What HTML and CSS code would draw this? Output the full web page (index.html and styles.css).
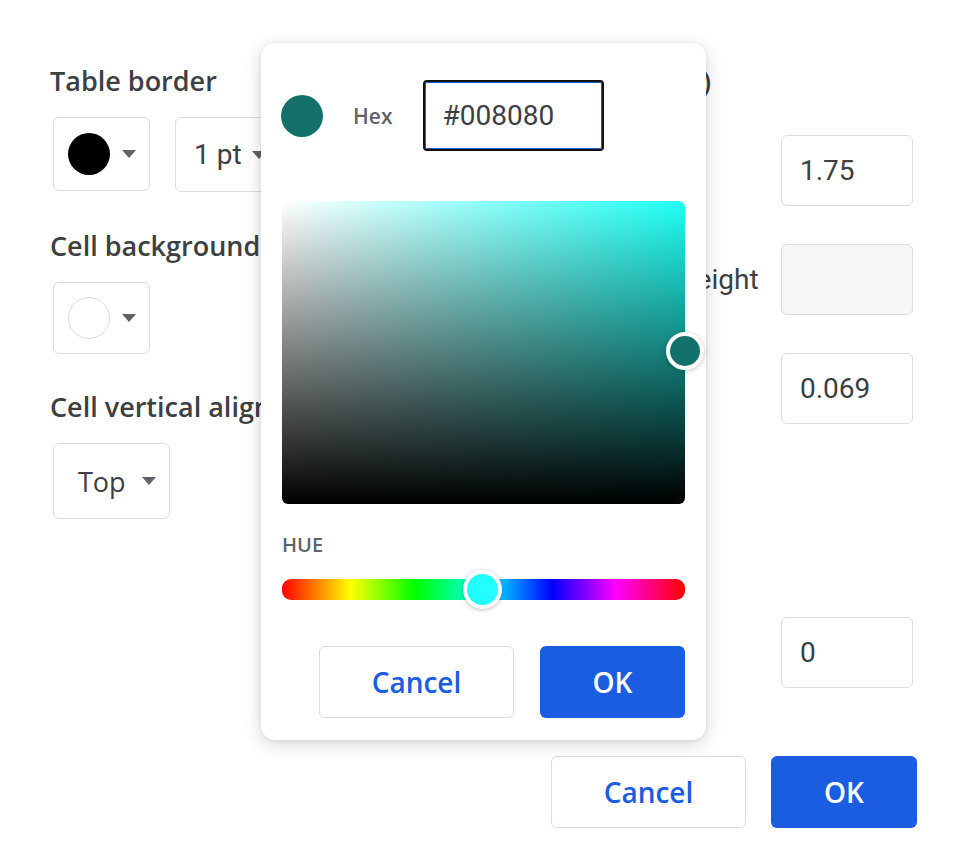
FILE: index.html
```html
<!DOCTYPE html>
<html lang="en">
<head>
<meta charset="utf-8">
<title>Table properties</title>
<link rel="stylesheet" href="styles.css">
</head>
<body>
<div class="page">
  <div class="main">
    <div class="left">
      <div class="section">
        <p class="label">Table border</p>
        <div class="field">
          <button class="color-btn"><span class="dot dot-black"></span><span class="caret"></span></button>
          <button class="select select-pt"><span class="select-text">1 pt</span><span class="caret"></span></button>
        </div>
      </div>
      <div class="section section-bg">
        <p class="label">Cell background color</p>
        <div class="field">
          <button class="color-btn color-btn-sm"><span class="dot dot-white"></span><span class="caret"></span></button>
        </div>
      </div>
      <div class="section section-align">
        <p class="label">Cell vertical alignment</p>
        <div class="field">
          <button class="select select-top"><span class="select-text gs">Top</span><span class="caret"></span></button>
        </div>
      </div>
    </div>
    <div class="right">
      <p class="label heading">Dimensions (in)</p>
      <div class="row row-first">
        <span class="row-label">Column width</span>
        <div class="num">1.75</div>
      </div>
      <div class="row">
        <span class="row-label">Minimum row height</span>
        <div class="num num-disabled"></div>
      </div>
      <div class="row">
        <span class="row-label">Cell padding</span>
        <div class="num">0.069</div>
      </div>
      <div class="row row-last">
        <span class="row-label">Indent</span>
        <div class="num">0</div>
      </div>
    </div>
  </div>
  <div class="actions">
    <button class="btn btn-outline">Cancel</button>
    <button class="btn btn-primary">OK</button>
  </div>

  <div class="picker">
    <div class="picker-head">
      <span class="swatch"></span>
      <span class="hex-label">Hex</span>
      <div class="hex-input">#008080</div>
    </div>
    <div class="sat">
      <span class="sat-thumb"></span>
    </div>
    <p class="hue-label">HUE</p>
    <div class="hue">
      <span class="hue-thumb"></span>
    </div>
    <div class="picker-actions">
      <button class="btn btn-outline">Cancel</button>
      <button class="btn btn-primary btn-ok">OK</button>
    </div>
  </div>
</div>
</body>
</html>
```

FILE: styles.css
```css
* { box-sizing: border-box; }
html, body { margin: 0; padding: 0; background: #fff; }
body { font-family: "Open Sans", "Noto Sans", sans-serif; color: #3c4043; }
button { font: inherit; background: none; margin: 0; padding: 0; cursor: pointer; }

.page { position: relative; width: 960px; height: 850px; overflow: hidden; }

.main { display: flex; justify-content: space-between; padding: 64px 47px 0 50px; }

.label { margin: 0; font-size: 27px; line-height: 34px; font-weight: 600; color: #3c4043; white-space: nowrap; }

.left { display: flex; flex-direction: column; }
.field { display: flex; gap: 25px; margin-top: 19px; margin-left: 3px; }
.section-bg { margin-top: 37px; }
.section-align { margin-top: 36px; }

.color-btn {
  display: flex; align-items: center; width: 97px; height: 74px;
  border: 1px solid #dadce0; border-radius: 6px; padding-left: 14px; background: #fff;
}
.color-btn-sm { height: 72px; }
.dot { width: 42px; height: 42px; border-radius: 50%; flex: none; }
.dot-black { background: #000; }
.dot-white { background: #fff; border: 1px solid #dadce0; }
.color-btn .caret { margin-left: 12px; }

.caret {
  width: 0; height: 0; flex: none;
  border-left: 7.5px solid transparent; border-right: 7.5px solid transparent;
  border-top: 8px solid #5f6368;
}

.select {
  display: flex; align-items: center; height: 75px;
  border: 1px solid #dadce0; border-radius: 6px; background: #fff;
}
.select-pt { width: 120px; padding-left: 18px; }
.select-top { width: 117px; height: 76px; padding-left: 24px; }
.select-text { font-family: Roboto, sans-serif; font-size: 28px; color: #3c4043; }
.select-text.gs { font-family: "Open Sans", sans-serif; font-size: 27px; font-weight: 500; }
.select-pt .caret { margin-left: 10px; }
.select-top .caret { margin-left: 16px; }

.right { display: flex; flex-direction: column; width: 410px; }
.heading { text-align: right; padding-right: 202px; }
.row { display: flex; align-items: center; justify-content: space-between; margin-top: 38px; }
.row-first { margin-top: 37px; }
.row-last { margin-top: 193px; }
.row-label { font-family: Roboto, sans-serif; font-size: 28px; color: #3c4043; white-space: nowrap; }
.num {
  width: 132px; height: 71px; border: 1px solid #dadce0; border-radius: 6px;
  padding-left: 18px; display: flex; align-items: center;
  font-family: Roboto, sans-serif; font-size: 28px; color: #3c4043; background: #fff;
}
.num-disabled { background: #f5f6f6; }

.actions { display: flex; justify-content: flex-end; gap: 25px; padding-right: 43px; margin-top: 68px; }

.btn {
  height: 72px; border-radius: 6px; font-family: "Open Sans", sans-serif;
  font-size: 28px; font-weight: 600; display: flex; align-items: center; justify-content: center;
}
.btn-outline { width: 195px; border: 1px solid #dadce0; background: #fff; color: #1a5de0; }
.btn-primary { width: 146px; border: 0; background: #1a5de0; color: #fff; }

/* color picker popover */
.picker {
  position: absolute; left: 261px; top: 43px; width: 445px; height: 697px;
  background: #fff; border-radius: 14px;
  box-shadow: 0 4px 18px rgba(0,0,0,0.16), 0 1px 4px rgba(0,0,0,0.08);
  padding: 37px 21px 22px 21px;
}
.picker-head { display: flex; align-items: center; height: 71px; }
.swatch { width: 42px; height: 42px; border-radius: 50%; background: #14706b; margin-left: -1px; flex: none; }
.hex-label { margin-left: 30px; font-size: 21px; font-weight: 600; color: #5f6368; }
.hex-input {
  margin-left: 31px; width: 181px; height: 71px; border: 2px solid #111; border-radius: 4px;
  box-shadow: inset 0 0 0 1px #1a5de0; padding-left: 17px; display: flex; align-items: center;
  font-family: Roboto, sans-serif; font-size: 28px; color: #3c4043;
}
.sat {
  position: relative; margin-top: 50px; height: 303px; border-radius: 6px;
  background:
    linear-gradient(to top, #000, rgba(0,0,0,0)),
    linear-gradient(to right, #fff, rgba(255,255,255,0)),
    #1ffff4;
}
.sat-thumb {
  position: absolute; right: -19px; top: 131px; width: 38px; height: 38px; border-radius: 50%;
  background: #14706b; border: 4px solid #fff; box-shadow: 0 1px 4px rgba(0,0,0,0.25);
}
.hue-label { margin: 29px 0 0; font-size: 20px; line-height: 24px; font-weight: 600; color: #5f6368; }
.hue {
  position: relative; margin-top: 22px; height: 21px; border-radius: 9px;
  background: linear-gradient(to right, #ff0000 0%, #ffff00 17%, #00ff00 33%, #00ffff 50%, #0000ff 67%, #ff00ff 83%, #ff0000 100%);
}
.hue-thumb {
  position: absolute; left: 181px; top: -9px; width: 39px; height: 39px; border-radius: 50%;
  background: #22ffff; border: 4px solid #fff; box-shadow: 0 1px 4px rgba(0,0,0,0.25);
}
.picker-actions { display: flex; justify-content: flex-end; gap: 26px; margin-top: 46px; }
.btn-ok { width: 145px; }
```
